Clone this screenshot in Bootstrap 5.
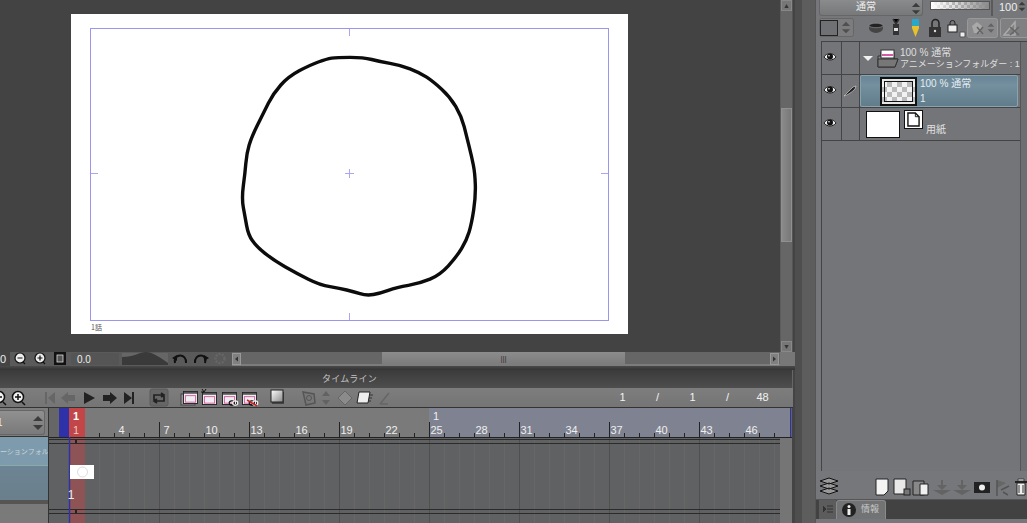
<!DOCTYPE html>
<html lang="ja">
<head>
<meta charset="UTF-8">
<title>タイムライン</title>
<link href="https://cdn.jsdelivr.net/npm/bootstrap@5.3.0/dist/css/bootstrap.min.css" rel="stylesheet">
<style>
html, body { margin: 0; height: 523px; overflow: hidden; background: #444; }
body { font-family: "Liberation Sans", "Noto Sans CJK JP", sans-serif; color: #e4e4e4; font-size: 10px; line-height: 1; }
svg { display: block; flex: none; }
.app { width: 1027px; height: 523px; }
.left-col { width: 795px; flex: none; }
.canvas-row { height: 352px; background: #434343; }
.canvas-view { width: 780px; padding: 14px 0 0 71px; }
.vbar { width: 13px; background: #666; border-left: 1px solid #5c5c5c; border-right: 1px solid #555; }
.vbar-end { height: 11px; background: #777; border: 1px solid #888; flex: none; color: #333; font-size: 7px; text-align: center; line-height: 9px; }
.vbar-thumb { height: 134px; margin-top: 97px; background: linear-gradient(90deg, #8a8a8a, #787878); border: 1px solid #909090; }
.status-bar { height: 14px; background: #606060; }
.status-num { width: 10px; color: #eee; font-size: 11px; padding-top: 2px; background: #444; }
.hbar { width: 548px; position: relative; background: #666; border-bottom: 2px solid #7c7c7c; }
.hbar-thumb { margin-left: 150px; width: 243px; background: linear-gradient(#8c8c8c, #7c7c7c); color: #333; font-size: 8px; text-align: center; padding-top: 3px; }
.hbar-rest { background: #777; }
.dark-gap { height: 4px; background: linear-gradient(#4a4a4a, #333); }
.tl-title { height: 18px; background: linear-gradient(#3b3b3b, #4e4e4e); color: #c4c4c4; font-size: 9px; padding: 5px 93px 0 0; text-align: center; width: 793px; letter-spacing: .3px; border-right: 1px solid #666; }
.tl-tools { height: 20px; width: 793px; background: linear-gradient(#7d7d7d, #757575); border-bottom: 1px solid #333; }
.tl-counts { margin-left: 3px; }
.tl-count { font-size: 11px; color: #f2f2f2; width: 35px; text-align: center; }
.tl-body { width: 793px; height: 115px; }
.tl-head { width: 49px; flex: none; background: #777; border-right: 1px solid #333; }
.tl-drop { height: 29px; background: #7d7d7d; border-bottom: 1px solid #333; padding: 2px 3px 2px 0; }
.tl-drop-in { height: 25px; background: linear-gradient(#909090, #7a7a7a); border: 1px solid #666; border-left: 0; border-radius: 0 3px 3px 0; color: #eee; font-size: 10px; }
.tl-drop-num { margin-left: -3px; }
.tl-folder { height: 28px; background: #7d9bac; color: #c8d4da; font-size: 7px; white-space: nowrap; overflow: hidden; }
.tl-anim { height: 35px; background: linear-gradient(#6d8494, #6a7f8b); border-top: 1px solid #8aa; }
.tl-rest { flex: 1; background: #7a7a7a; border-top: 4px solid #555; }
.side-strip { width: 20px; flex: none; background: linear-gradient(90deg, #4e4e4e 0 7px, #5d5d5d 7px 20px); }
.right-panel { width: 212px; flex: none; background: #76777a; border-left: 1px solid #555; }
.r-top { height: 16px; padding-left: 3px; }
.blend { width: 104px; height: 16px; background: linear-gradient(#8a8b8d, #77787a); border: 1px solid #666; border-top: 0; border-radius: 0 0 3px 3px; font-size: 10px; color: #eee; padding: 2px 1px 0 36px; }
.opacity { width: 60px; height: 9px; margin: 1px 0 0 7px; border: 1px solid #555; background-color: #ddd; background-image: linear-gradient(90deg, #fff, rgba(255,255,255,.1) 40%, #8a8a8a), conic-gradient(#aaa 25%, transparent 0 50%, #aaa 0 75%, transparent 0); background-size: 100% 100%, 6px 6px; }
.op-rule { width: 2px; height: 16px; margin-left: 1px; background: #5a5a5a; }
.op-num { font-size: 11px; margin-left: 6px; padding-top: 2px; color: #eee; }
.op-arrows { margin-left: 1px; }
.r-tools { height: 24px; padding: 2px 0 0 3px; }
.l-list { height: 430px; margin: 1px 0 0 5px; border-left: 1px solid #444; border-top: 1px solid #444; }
.l-rows { width: 198px; background: #747578; }
.l-row { height: 33px; border-bottom: 1px solid #444; }
.l-eye { width: 20px; border-right: 1px solid #444; flex: none; padding: 10px 0 0 1px; }
.l-pen { width: 18px; border-right: 1px solid #444; flex: none; padding: 8px 0 0 1px; }
.l-names { margin-left: 1px; white-space: nowrap; color: #dfdfdf; gap: 2px; }
.l-sub { font-size: 9px; }
.l-sel { background: linear-gradient(#698596, #74909f 30%, #617d8c); border: 1px solid #88a2af; border-radius: 2px; height: 32px; width: 158px; flex: none; color: #e6edf0; font-size: 10px; }
.l-sel-names { gap: 5px; padding-top: 3px; }
.l-thumb { width: 37px; height: 29px; margin: 1px 3px 0 19px; border: 2px solid #111; outline: 1px solid #111; outline-offset: -5px; background: #e6e6e6; }
.l-thumb span { display: block; margin-top: 3px; height: 20px; background-color: #f2f2f2; background-image: conic-gradient(#bbb 25%, transparent 0 50%, #bbb 0 75%, transparent 0); background-size: 10px 10px; }
.l-paper { padding-left: 6px; }
.l-paper-box { width: 34px; height: 27px; margin-top: 3px; background: #fff; border: 1px solid #111; }
.l-paper-name { margin: 17px 0 0 2px; color: #e0e0e0; }
.l-bar { width: 8px; background: #6d6e71; border-left: 1px solid #555; }
.r-bottom { height: 23px; margin-top: 4px; }
.r-tabs { height: 20px; background: #424242; margin-top: 1px; border-top: 1px solid #555; padding-left: 3px; }
.r-menu { width: 17px; background: #5c5c5c; flex: none; }
.r-tab { width: 50px; flex: none; background: #727375; border: 1px solid #8a8a8a; border-bottom: 0; border-radius: 3px 3px 0 0; color: #c9c9c9; font-size: 9px; gap: 5px; padding: 2px 0 0 5px; }
.r-tab-name { padding-top: 2px; }
.r-foot { flex: 1; background: #76777a; }
</style>
</head>
<body>
<svg width="0" height="0" class="position-absolute">
  <symbol id="eye" viewBox="0 0 14 10"><path d="M1 5C3 1 10 0 13 5C10 9 4 9 1 5Z" fill="#eee" stroke="#222"/><circle cx="7" cy="4.600" r="3" fill="#111"/><circle cx="6" cy="3.800" r=".8" fill="#fff"/></symbol>
  <symbol id="doc" viewBox="0 0 14 16"><path d="M1 1H9L13 5V15H1Z" fill="#fff" stroke="#111" stroke-width="1.500"/><path d="M9 1V5H13" fill="none" stroke="#111"/></symbol>
  <symbol id="win" viewBox="0 0 16 14"><rect x=".5" y=".5" width="15" height="13" fill="#eee" stroke="#222"/><path d="M1 1H15V3H1Z" fill="#555"/><rect x="2.500" y="5" width="11" height="7" fill="#eee" stroke="#d45aa8"/></symbol>
  <symbol id="chain" viewBox="0 0 12 7"><rect x="1" y="1" width="6" height="5" rx="2.500" fill="none" stroke="#111" stroke-width="1.400"/><rect x="5" y="1" width="6" height="5" rx="2.500" fill="none" stroke="#eee" stroke-width="1.400"/></symbol>
  <symbol id="updown" viewBox="0 0 12 16"><path d="M6 1L11 6H1ZM6 15L1 10H11Z" fill="#3c3c3c"/></symbol>
</svg>

<div class="app d-flex">
  <div class="left-col d-flex flex-column">
    <!-- canvas -->
    <div class="canvas-row d-flex">
      <div class="canvas-view">
        <svg id="page" width="557" height="320" viewBox="71 14 557 320">
          <rect x="71" y="14" width="557" height="320" fill="#fff"/>
          <rect x="90.500" y="28.500" width="518" height="292" fill="none" stroke="#9a96ee"/>
          <path d="M349.500 29v7M349.500 313v7M91 173.500h7M601 173.500h7M345 173.500h9M349.500 169v9" stroke="#aaa6f5" fill="none"/>
          <path id="stroke" fill="none" stroke="#0c0c0c" stroke-width="3.400" stroke-linejoin="round"/>
          <text x="91" y="330" font-size="7" fill="#555" font-family="Noto Sans CJK JP">1話</text>
        </svg>
      </div>
      <div class="vbar d-flex flex-column">
        <div class="vbar-end">▲</div>
        <div class="vbar-thumb"></div>
        <div class="flex-grow-1"></div>
        <div class="vbar-end">▼</div>
      </div>
    </div>
    <div class="status-bar d-flex">
      <div class="status-num">0</div>
      <svg width="222" height="14" viewBox="10 352 222 14">
        <rect x="10" y="352" width="222" height="14" fill="#5a5a5a"/>
        <g fill="#eee" stroke="#111" stroke-width="1.200"><circle cx="20" cy="358" r="5"/><circle cx="40" cy="358" r="5"/></g>
        <path d="M17.500 358h5M37.500 358h5M40 355.500v5M23 362l2 2M43 362l2 2" stroke="#111" stroke-width="1.200"/>
        <rect x="54" y="352" width="12" height="13" fill="#111"/><rect x="57" y="355" width="6" height="7" fill="#555" stroke="#ddd" stroke-width=".8"/>
        <rect x="71" y="353" width="48" height="12" fill="#555"/>
        <text x="77" y="363" font-size="10" fill="#eee">0.0</text>
        <rect x="122" y="353" width="46" height="12" fill="#666"/>
        <path d="M122 365V357C134 357 140 352 146 352C152 352 158 356 168 363V365Z" fill="#3a3a3a"/>
        <path d="M175 363C173 353 187 353 186 363" fill="none" stroke="#111" stroke-width="2"/><path d="M172 358l5 -3v6Z" fill="#111"/>
        <path d="M195 363C194 353 208 353 205 363" fill="none" stroke="#111" stroke-width="2"/><path d="M209 358l-5 -3v6Z" fill="#111"/>
        <circle cx="220" cy="358.500" r="4.500" fill="none" stroke="#666" stroke-width="2.500" stroke-dasharray="2 1.200"/>
      </svg>
      <div class="hbar d-flex">
        <svg width="10" height="14" viewBox="0 0 10 14" class="position-absolute top-0 start-0"><rect x=".5" y="1.500" width="8" height="11" fill="#808080" stroke="#999"/><path d="M6 4.500L3 7l3 2.500Z" fill="#333"/></svg>
        <div class="hbar-thumb">|||</div>
        <svg width="10" height="14" viewBox="0 0 10 14" class="position-absolute top-0 end-0"><rect x=".5" y="1.500" width="8" height="11" fill="#808080" stroke="#999"/><path d="M3 4.500L6 7l-3 2.500Z" fill="#333"/></svg>
      </div>
      <div class="hbar-rest flex-grow-1"></div>
    </div>
    <div class="dark-gap"></div>

    <!-- timeline -->
    <div class="tl-title">タイムライン</div>
    <div class="tl-tools d-flex align-items-center">
      <svg width="602" height="20" viewBox="0 388 602 20">
        <g fill="#f2f2f2" stroke="#111" stroke-width="1.500"><circle cx="-1" cy="397" r="5.500"/><circle cx="18" cy="397" r="5.500"/></g>
        <path d="M15 397h6M18 394v6M3 402l3 3M22 402l3 3M-3 397h5" stroke="#111" stroke-width="1.500"/>
        <path d="M45 392h2v12h-2ZM55 392v12l-7 -6Z" fill="#666"/>
        <path d="M61 398l7 -6v3h7v6h-7v3Z" fill="#666"/>
        <path d="M84 392l11 6 -11 6Z" fill="#222"/>
        <path d="M117 398l-7 -6v3h-7v6h7v3Z" fill="#222"/>
        <path d="M124 392l8 6 -8 6ZM132 392h2v12h-2Z" fill="#222"/>
        <rect x="150" y="389" width="18" height="17" rx="2" fill="#666" stroke="#5a5a5a"/>
        <path d="M154 400v-5h9M161 393l3 2 -3 2M164 396v5h-9M157 399l-3 2 3 2" fill="none" stroke="#222" stroke-width="1.700"/>
        <rect x="181" y="394" width="14" height="11" fill="#999" stroke="#444"/>
        <use href="#win" x="183" y="391" width="15" height="13"/>
        <use href="#win" x="202" y="392" width="15" height="13"/><path d="M204 392l-2 -3M204 392l2 -3M204 392h-3" stroke="#111"/>
        <use href="#win" x="222" y="392" width="15" height="13"/><use href="#chain" x="228" y="400" width="11" height="6"/>
        <use href="#win" x="242" y="392" width="15" height="13"/><use href="#chain" x="248" y="400" width="11" height="6"/><path d="M247 400l10 6" stroke="#c22" stroke-width="1.500"/>
        <rect x="272" y="392" width="12" height="12" fill="#444"/><rect x="271" y="390" width="12" height="12" fill="url(#gr)" stroke="#222"/>
        <defs><linearGradient id="gr" x1="0" x2="1" y1="0" y2="1"><stop offset="0" stop-color="#fff"/><stop offset="1" stop-color="#888"/></linearGradient></defs>
        <path d="M303 392l11 2 1 9 -9 2Z" fill="#777" stroke="#555" stroke-width="1.500"/><circle cx="309" cy="398" r="2.500" fill="none" stroke="#555"/>
        <path d="M326 391l4 5h-8ZM326 405l-4 -5h8Z" fill="#626262"/>
        <path d="M345 391l7 7 -7 7 -7 -7Z" fill="#8b8b8b" stroke="#666"/>
        <path d="M359 392h11l-2 11h-11Z" fill="#eee" stroke="#222"/><path d="M370 395h3M369 398h3M368 401h3" stroke="#333"/>
        <path d="M380 404l9 -11M380 404h8" stroke="#666" stroke-width="1.500" fill="none"/>
      </svg>
      <div class="tl-counts d-flex">
        <div class="tl-count">1</div><div class="tl-count">/</div><div class="tl-count">1</div><div class="tl-count">/</div><div class="tl-count">48</div>
      </div>
    </div>
    <div class="tl-body d-flex">
      <div class="tl-head d-flex flex-column">
        <div class="tl-drop"><div class="tl-drop-in d-flex align-items-center justify-content-between"><span class="tl-drop-num">1</span><svg width="12" height="16"><use href="#updown"/></svg></div></div>
        <div class="tl-folder d-flex align-items-center"><span>ーションフォル</span></div>
        <div class="tl-anim"></div>
        <div class="tl-rest"></div>
      </div>
      <svg id="tracks" width="743" height="115" viewBox="50 408 743 115" font-size="11" fill="#eee"></svg>
    </div>
  </div>

  <div class="side-strip"></div>

  <!-- layers -->
  <div class="right-panel d-flex flex-column">
    <div class="r-top d-flex">
      <div class="blend d-flex justify-content-between"><span>通常</span><svg width="10" height="13" viewBox="0 0 12 16"><use href="#updown"/></svg></div>
      <div class="opacity"></div>
      <div class="op-rule"></div>
      <div class="op-num">100</div>
      <svg class="op-arrows" width="8" height="13" viewBox="0 0 12 16"><use href="#updown"/></svg>
    </div>
    <div class="r-tools d-flex">
      <svg width="208" height="21" viewBox="819 18 208 21">
        <rect x="819.500" y="18.500" width="34" height="18" rx="2" fill="#7c7c7e" stroke="#666"/>
        <rect x="820.500" y="20.500" width="17" height="15" fill="#707174" stroke="#222"/>
        <use href="#updown" x="841" y="21" width="10" height="13" opacity=".7"/>
        <ellipse cx="876" cy="28" rx="7" ry="5" fill="#444"/><ellipse cx="876" cy="25.500" rx="7" ry="2.200" fill="#222" stroke="#999" stroke-width=".6"/>
        <path d="M893 19l3 5 3 -5M896 24v11" stroke="#333" stroke-width="1.500"/><rect x="893" y="24" width="6" height="11" fill="#333"/><rect x="894" y="28" width="4" height="3" fill="#ddd"/>
        <path d="M912 19h7v9l-3.500 9 -3.500 -9Z" fill="#e6c22c"/><path d="M912 19h7v7h-7Z" fill="#28a7c8"/>
        <path d="M932 27v-4a3.500 3.500 0 0 1 7 0v4" fill="none" stroke="#222" stroke-width="1.500"/><rect x="929" y="27" width="12" height="10" fill="#333"/><circle cx="935" cy="31" r="1.200" fill="#ddd"/>
        <path d="M950 25v-2a2.500 2.500 0 0 1 5 0v2" fill="none" stroke="#222"/><rect x="948" y="25" width="9" height="7" fill="#eee" stroke="#222"/><path d="M960 37h5v-5h-5Z" fill="#eee" stroke="#555"/>
        <rect x="967.500" y="18.500" width="30" height="19" rx="2" fill="#8a8a8c" stroke="#999"/>
        <path d="M972 26l5 -4 5 4 -2 7h-6Z" fill="#a9a9a9"/><path d="M977 27l6 7M983 27l-6 7" stroke="#666" stroke-width="1.500"/><use href="#updown" x="987" y="22" width="8" height="12" opacity=".5"/>
        <rect x="1000.500" y="18.500" width="30" height="19" rx="2" fill="#808082" stroke="#999"/>
        <path d="M1004 35l11 -13v13Z" fill="none" stroke="#aaa" stroke-width="1.500"/><path d="M1010 27l9 8M1019 27l-9 8" stroke="#666" stroke-width="1.500"/>
      </svg>
    </div>
    <div class="l-list d-flex">
      <div class="l-rows d-flex flex-column">
        <div class="l-row d-flex">
          <div class="l-eye"><svg width="14" height="10"><use href="#eye"/></svg></div>
          <div class="l-pen"></div>
          <div class="d-flex align-items-center">
            <svg width="39" height="22" viewBox="0 0 39 22"><path d="M3 9h10l-5 5Z" fill="#f0f0f0"/><path d="M18 19V9h3V5h13v7h4l-3 8H18Z" fill="#888" stroke="#333"/><rect x="21" y="3" width="13" height="8" fill="#fff" stroke="#333"/><path d="M22 8h11" stroke="#d45aa8" stroke-width="2"/><path d="M18 12h20l-3 8H18Z" fill="#777" stroke="#333"/></svg>
            <div class="l-names d-flex flex-column"><span>100 % 通常</span><span class="l-sub">アニメーションフォルダー : 1</span></div>
          </div>
        </div>
        <div class="l-row d-flex">
          <div class="l-eye"><svg width="14" height="10"><use href="#eye"/></svg></div>
          <div class="l-pen"><svg width="14" height="14" viewBox="0 0 14 14"><path d="M1 13C3 11 7 7 10 4L13 3 12 6C9 9 5 12 1 13Z" fill="#222" stroke="#ddd" stroke-width=".6"/></svg></div>
          <div class="l-sel d-flex">
            <div class="l-thumb"><span></span></div>
            <div class="l-sel-names d-flex flex-column"><span>100 % 通常</span><span>1</span></div>
          </div>
        </div>
        <div class="l-row d-flex">
          <div class="l-eye"><svg width="14" height="10"><use href="#eye"/></svg></div>
          <div class="l-pen"></div>
          <div class="l-paper d-flex">
            <div class="l-paper-box"></div>
            <svg class="ms-1" width="20" height="21" viewBox="0 0 20 21"><rect x=".5" y="2.500" width="18" height="18" fill="#fff" stroke="#111"/><use href="#doc" x="3" y="4" width="13" height="15"/></svg>
            <span class="l-paper-name">用紙</span>
          </div>
        </div>
      </div>
      <div class="l-bar"></div>
    </div>
    <div class="r-bottom">
      <svg width="211" height="23" viewBox="816 475 211 23">
        <path d="M820 481l9 -3 9 3 -9 3ZM820 486l9 -3 9 3 -9 3ZM820 491l9 -3 9 3 -9 3Z" fill="#999" stroke="#111"/>
        <path d="M876 479h12v12l-4 4h-8Z" fill="#f4f4f4" stroke="#222"/>
        <path d="M894 479h12v15h-12Z" fill="#e8e8e8" stroke="#222"/><rect x="904" y="489" width="6" height="6" fill="#777" stroke="#222"/>
        <path d="M913 481h11v14h-11Z" fill="#888" stroke="#222"/><path d="M920 484h8v11h-8Z" fill="#f0f0f0" stroke="#222"/>
        <path d="M941 480v5h-4l5 5 5 -5h-4v-5ZM933 490l9 5 9 -5" fill="#636363"/>
        <path d="M961 480v5h-4l5 5 5 -5h-4v-5ZM953 490l9 5 9 -5" fill="#636363"/>
        <rect x="974" y="482" width="16" height="11" fill="#222"/><circle cx="982" cy="487.500" r="3" fill="#eee"/>
        <path d="M997 480l9 3 -9 5Z" fill="#666"/><path d="M997 480v16M1001 490l8 -4M1003 492l5 3" stroke="#555" stroke-width="1.500"/>
        <path d="M1017 483h8v12h-8Z" fill="#eee" stroke="#222"/><path d="M1015 482h12" stroke="#222" stroke-width="2"/><path d="M1018 479h6v2h-6Z" fill="#ddd" stroke="#222" stroke-width=".7"/><path d="M1019 485v8M1023 485v8" stroke="#333"/>
      </svg>
    </div>
    <div class="r-tabs d-flex">
      <div class="r-menu d-flex align-items-center justify-content-center"><svg width="10" height="10"><path d="M0 1l3 3 -3 3ZM4 1h6M4 4h6M4 7h6" fill="#333" stroke="#333"/></svg></div>
      <div class="r-tab d-flex">
        <svg width="14" height="14" viewBox="0 0 14 14"><circle cx="7" cy="7" r="7" fill="#222"/><circle cx="7" cy="3.500" r="1.500" fill="#eee"/><rect x="5.500" y="6" width="3" height="6" fill="#eee"/></svg>
        <span class="r-tab-name">情報</span>
      </div>
    </div>
    <div class="r-foot"></div>
  </div>
</div>

<script src="https://cdn.jsdelivr.net/npm/bootstrap@5.3.0/dist/js/bootstrap.bundle.min.js"></script>
<script>
// hand traced outline, in page pixels
const pts = [[320,52],[400,52],[450,65],[510,75],[570,98],[610,125],[660,170],[695,230],[710,290],[725,350],[735,400],[737,470],[725,550],[710,600],[680,650],[630,705],[570,730],[500,742],[450,760],[410,767],[370,755],[330,745],[270,735],[200,700],[130,660],[80,620],[55,585],[45,530],[35,475],[45,400],[50,340],[65,290],[100,220],[130,160],[175,110],[240,75],[290,57]]
  .map(p => [p[0] / 3 + 230, p[1] / 3 + 40]);
const mid = (a, b) => [(a[0] + b[0]) / 2, (a[1] + b[1]) / 2];
let d = 'M' + mid(pts[pts.length - 1], pts[0]).join(' ');
pts.forEach((p, i) => {
  d += ' Q' + p.join(' ') + ' ' + mid(p, pts[(i + 1) % pts.length]).join(' ');
});
document.getElementById('stroke').setAttribute('d', d + 'Z');

// timeline: ruler and frame grid, one frame is 15px wide
let s = '';
s += '<rect x="50" y="408" width="743" height="115" fill="#606162"/>';
s += '<rect x="50" y="408" width="10" height="29" fill="#666"/><rect x="60" y="408" width="10" height="29" fill="#2e31a8"/>';
s += '<rect x="86" y="408" width="344" height="29" fill="#7a7a7b"/><rect x="430" y="408" width="361" height="29" fill="#7f8391"/><rect x="791" y="408" width="1" height="29" fill="#2e31a8"/>';
s += '<rect x="781" y="437" width="12" height="86" fill="#757575"/>';
for (let n = 1; n <= 48; n++) {
  const x = 70 + (n - 1) * 15;
  const long = (n - 1) % 6 === 0;
  if (x < 781) s += `<path d="M${x + .5} 437V523" stroke="${long ? '#505050' : '#676768'}"/>`;
  s += `<path d="M${x + .5} ${long ? 422 : 433}V437" stroke="#222"/>`;
  if ((n - 1) % 3 === 0 && n > 1) s += `<text x="${x + 7.5}" y="434" text-anchor="middle">${n}</text>`;
}
s += '<rect x="70" y="408" width="16" height="29" fill="#c24547"/><rect x="70" y="437" width="16" height="86" fill="#8e5355"/>';
s += '<text x="77" y="434" text-anchor="middle" fill="#f0c8c8">1</text><text x="77" y="420" text-anchor="middle" fill="#fff" font-weight="bold">1</text>';
s += '<text x="437" y="420" text-anchor="middle">1</text>';
s += '<path d="M50 437.500H781M50 439.500H781M50 443.500H781M50 509.500H781M50 513.500H781" stroke="#2b2b2b"/>';
s += '<path d="M50 437.500H793" stroke="#222"/><path d="M77 440V443M77 510V513" stroke="#222" stroke-width="2"/>';
s += '<path d="M70.500 437V523" stroke="#2e31a8" stroke-width="1.500"/>';
s += '<rect x="71" y="465" width="24" height="14" fill="#fff"/><circle cx="83.500" cy="472" r="5" fill="none" stroke="#ddd"/>';
s += '<text x="72" y="499" text-anchor="middle" font-size="12">1</text>';
document.getElementById('tracks').innerHTML = s;
</script>
</body>
</html>
